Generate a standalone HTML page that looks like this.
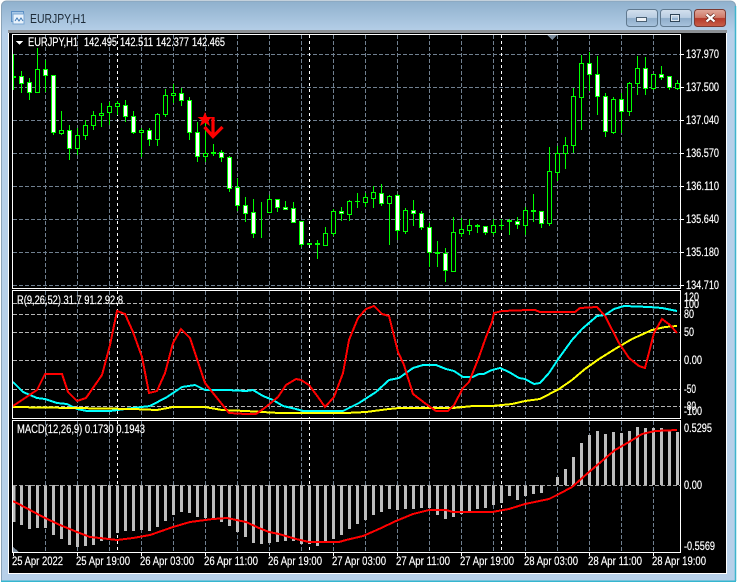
<!DOCTYPE html>
<html><head><meta charset="utf-8"><title>EURJPY,H1</title>
<style>
html,body{margin:0;padding:0;background:#fff;width:738px;height:582px;overflow:hidden}
svg{display:block}
text{font-family:"Liberation Sans",sans-serif;font-size:11.5px;fill:#fff;stroke:#fff;stroke-width:.18px}
</style></head><body>
<svg xmlns="http://www.w3.org/2000/svg" width="738" height="582" viewBox="0 0 738 582">
<defs>
<linearGradient id="tb" x1="0" y1="0" x2="0" y2="1"><stop offset="0" stop-color="#8fb0cd"/><stop offset=".055" stop-color="#b7d0e9"/><stop offset="1" stop-color="#b7d0e9"/></linearGradient>
<linearGradient id="bt" x1="0" y1="0" x2="0" y2="1"><stop offset="0" stop-color="#d3e0ee"/><stop offset=".48" stop-color="#b9cde2"/><stop offset=".52" stop-color="#8fadca"/><stop offset="1" stop-color="#a9c4de"/></linearGradient>
<linearGradient id="cl" x1="0" y1="0" x2="0" y2="1"><stop offset="0" stop-color="#e0a99c"/><stop offset=".48" stop-color="#cf7a69"/><stop offset=".52" stop-color="#b5392a"/><stop offset="1" stop-color="#c9604a"/></linearGradient>
</defs>
<!-- window -->
<path d="M1.5 582V6a5 5 0 0 1 5-5H730a5 5 0 0 1 5.5 5V582" fill="url(#tb)" stroke="#8aa3b8"/>
<path d="M1 581.5H736" stroke="#35b6cf" stroke-width="2"/>
<path d="M735.5 6V581" stroke="#3fb4cc" stroke-width="1.5"/>
<rect x="8" y="30" width="719" height="3" fill="#8b8f93"/>
<rect x="8" y="33" width="719" height="541" fill="#fff"/>
<rect x="9" y="33" width="717" height="540" fill="#000"/>
<!-- title -->
<g shape-rendering="crispEdges">
<rect x="11.500" y="11.500" width="12" height="10" fill="#a9c8e6" stroke="#5b8fc4"/>
<rect x="13" y="14" width="11" height="10" fill="#e8f2fb" stroke="#7ba7d3"/>
</g>
<path d="M15 21l2-3 2 3 2-3 2 3" fill="none" stroke="#3f79b5"/>
<text x="30" y="23" textLength="56" lengthAdjust="spacingAndGlyphs" style="font-size:12.5px;fill:#1d2b38;stroke:none">EURJPY,H1</text>
<!-- buttons -->
<rect x="626.500" y="9.500" width="31" height="17" rx="3" fill="url(#bt)" stroke="#60798f"/>
<rect x="660.500" y="9.500" width="31" height="17" rx="3" fill="url(#bt)" stroke="#60798f"/>
<rect x="694.500" y="9.500" width="31" height="17" rx="3" fill="url(#cl)" stroke="#7c3a32"/>
<rect x="636.500" y="17.500" width="10" height="4" fill="#eef2f6" stroke="#4a5f72"/>
<rect x="670.500" y="14.500" width="9" height="7" fill="none" stroke="#2f4558" stroke-width="1"/>
<rect x="671.500" y="15.500" width="7" height="5" fill="none" stroke="#dfe8f0"/>
<path d="M706.500 14.500l8 7M714.500 14.500l-8 7" stroke="#5d2017" stroke-width="3.600"/>
<path d="M706.500 14.500l8 7M714.500 14.500l-8 7" stroke="#fff" stroke-width="2.200"/>

<g shape-rendering="crispEdges">
<!-- grid -->
<path d="M13 54.500H680M13 87.500H680M13 120.500H680M13 153.500H680M13 186.500H680M13 219.500H680M13 252.500H680M13 285.500H680" stroke="#708090" stroke-dasharray="4 2" fill="none"/>
<path d="M45.500 35V288M77.500 35V288M109.500 35V288M141.500 35V288M173.500 35V288M205.500 35V288M237.500 35V288M269.500 35V288M301.500 35V288M333.500 35V288M365.500 35V288M397.500 35V288M429.500 35V288M461.500 35V288M493.500 35V288M525.500 35V288M557.500 35V288M589.500 35V288M621.500 35V288M653.500 35V288M45.500 291V418M77.500 291V418M109.500 291V418M141.500 291V418M173.500 291V418M205.500 291V418M237.500 291V418M269.500 291V418M301.500 291V418M333.500 291V418M365.500 291V418M397.500 291V418M429.500 291V418M461.500 291V418M493.500 291V418M525.500 291V418M557.500 291V418M589.500 291V418M621.500 291V418M653.500 291V418M45.500 421V552M77.500 421V552M109.500 421V552M141.500 421V552M173.500 421V552M205.500 421V552M237.500 421V552M269.500 421V552M301.500 421V552M333.500 421V552M365.500 421V552M397.500 421V552M429.500 421V552M461.500 421V552M493.500 421V552M525.500 421V552M557.500 421V552M589.500 421V552M621.500 421V552M653.500 421V552" stroke="#708090" stroke-dasharray="4 2" fill="none"/>
<path d="M13 303.500H680M13 314.500H680M13 332.500H680M13 360.500H680M13 389.500H680M13 406.500H680" stroke="#b5b5b5" stroke-dasharray="4 2" fill="none"/>
<path d="M117.500 35V288M309.500 35V288M501.500 35V288M117.500 291V418M309.500 291V418M501.500 291V418M117.500 421V552M309.500 421V552M501.500 421V552" stroke="#fff" stroke-dasharray="3 3" fill="none"/>

<!-- wicks -->
<path stroke="#00ff00" fill="none" d="M13.500 54V90M21.500 71V93M29.500 78V100M37.500 48V92M45.500 60V92M53.500 75V135M61.500 111V135M69.500 125V160M77.500 128V155M85.500 120V140M93.500 111V130M101.500 103V127M109.500 102V125M117.500 101V115M125.500 100V122M133.500 111V134M141.500 128V157M149.500 128V146M157.500 113V146M165.500 89V117M173.500 84V103M181.500 88V106M189.500 97V140M197.500 122V162M205.500 122V162M213.500 144V156M221.500 150V162M229.500 156V192M237.500 178V211M245.500 197V222M253.500 199V238M261.500 202V238M269.500 195V213M277.500 199V212M285.500 201V210M293.500 202V222M301.500 221V247M309.500 243V245M317.500 240V259M325.500 227V245M333.500 209V236M341.500 207V221M349.500 200V221M357.500 193V208M365.500 193V207M373.500 186V208M381.500 184V206M389.500 195V245M397.500 194V240M405.500 208V234M413.500 200V226M421.500 211V230M429.500 223V267M437.500 241V267M445.500 248V282M453.500 217V271M461.500 218V237M469.500 219V235M477.500 224V233M485.500 226V235M493.500 219V235M501.500 219V230M509.500 219V235M517.500 217V229M525.500 207V235M533.500 194V222M541.500 211V228M549.500 147V226M557.500 146V181M565.500 137V169M573.500 88V153M581.500 55V130M589.500 52V91M597.500 56V115M605.500 93V137M613.500 97V134M621.500 93V133M629.500 82V116M637.500 56V95M645.500 57V95M653.500 74V90M661.500 66V80M669.500 76V90M677.500 80V90"/>
<!-- hollow bodies -->
<path stroke="#00ff00" fill="#000" d="M35.500 69.500h4v23h-4zM59.500 130.500h4v3h-4zM75.500 135.500h4v13h-4zM83.500 125.500h4v10h-4zM91.500 115.500h4v10h-4zM99.500 113.500h4v2h-4zM107.500 106.500h4v6h-4zM115.500 103.500h4v3h-4zM139.500 130.500h4v2h-4zM155.500 114.500h4v25h-4zM163.500 95.500h4v19h-4zM171.500 93.500h4v2h-4zM203.500 153.500h4v3h-4zM267.500 199.500h4v13h-4zM323.500 233.500h4v12h-4zM331.500 211.500h4v22h-4zM347.500 201.500h4v13h-4zM363.500 197.500h4v5h-4zM371.500 192.500h4v6h-4zM387.500 196.500h4v7h-4zM403.500 210.500h4v21h-4zM451.500 232.500h4v39h-4zM459.500 229.500h4v4h-4zM467.500 225.500h4v5h-4zM491.500 225.500h4v7h-4zM523.500 210.500h4v15h-4zM547.500 171.500h4v52h-4zM555.500 153.500h4v19h-4zM563.500 145.500h4v8h-4zM571.500 96.500h4v49h-4zM579.500 63.500h4v34h-4zM611.500 99.500h4v33h-4zM627.500 83.500h4v28h-4zM635.500 68.500h4v15h-4zM651.500 74.500h4v14h-4zM675.500 83.500h4v5h-4z"/>
<!-- white bodies -->
<path stroke="#00ff00" fill="#fff" d="M19.500 76.500h4v7h-4zM27.500 82.500h4v10h-4zM43.500 69.500h4v6h-4zM51.500 75.500h4v57h-4zM67.500 130.500h4v18h-4zM123.500 105.500h4v11h-4zM131.500 116.500h4v16h-4zM147.500 130.500h4v9h-4zM179.500 93.500h4v7h-4zM187.500 100.500h4v32h-4zM195.500 132.500h4v24h-4zM219.500 152.500h4v5h-4zM227.500 157.500h4v31h-4zM235.500 187.500h4v18h-4zM243.500 205.500h4v8h-4zM251.500 212.500h4v21h-4zM275.500 199.500h4v8h-4zM283.500 207.500h4v2h-4zM291.500 208.500h4v14h-4zM299.500 221.500h4v23h-4zM339.500 211.500h4v2h-4zM379.500 193.500h4v10h-4zM395.500 195.500h4v35h-4zM411.500 210.500h4v3h-4zM419.500 213.500h4v14h-4zM427.500 227.500h4v25h-4zM443.500 253.500h4v17h-4zM483.500 226.500h4v6h-4zM515.500 221.500h4v3h-4zM539.500 211.500h4v12h-4zM587.500 63.500h4v11h-4zM595.500 74.500h4v22h-4zM603.500 96.500h4v35h-4zM619.500 99.500h4v12h-4zM643.500 68.500h4v20h-4zM659.500 74.500h4v3h-4zM667.500 76.500h4v11h-4z"/>
<!-- doji -->
<path fill="#00ff00" d="M13 76h3v2h-3zM211 152h5v2h-5zM307 243h5v2h-5zM315 243h5v2h-5zM355 201h5v1h-5zM435 252h5v2h-5zM475 225h5v2h-5zM499 225h5v1h-5zM507 220h5v2h-5zM531 210h5v2h-5z"/>

<!-- MACD bars -->
<path stroke="#bdbdbd" stroke-width="3" fill="none" d="M14 485V522M21.500 485V525M29.500 485V529M37.500 485V528M45.500 485V528M53.500 485V535M61.500 485V539M69.500 485V545M77.500 485V547M85.500 485V546M93.500 485V545M101.500 485V541M109.500 485V538M117.500 485V533M125.500 485V531M133.500 485V531M141.500 485V530M149.500 485V531M157.500 485V527M165.500 485V521M173.500 485V515M181.500 485V512M189.500 485V513M197.500 485V517M205.500 485V518M213.500 485V519M221.500 485V522M229.500 485V526M237.500 485V532M245.500 485V537M253.500 485V543M261.500 485V544M269.500 485V543M277.500 485V542M285.500 485V541M293.500 485V541M301.500 485V544M309.500 485V544M317.500 485V546M325.500 485V543M333.500 485V539M341.500 485V535M349.500 485V529M357.500 485V524M365.500 485V520M373.500 485V515M381.500 485V512M389.500 485V509M397.500 485V510M405.500 485V509M413.500 485V509M421.500 485V508M429.500 485V508M437.500 485V515M445.500 485V519M453.500 485V517M461.500 485V514M469.500 485V512M477.500 485V509M485.500 485V508M493.500 485V505M501.500 485V503M509.500 485V496M517.500 485V500M525.500 485V496M533.500 485V494M541.500 485V493M557.500 485V477M565.500 485V469M573.500 485V457M581.500 485V443M589.500 485V435M597.500 485V431M605.500 485V434M613.500 485V432M621.500 485V433M629.500 485V431M637.500 485V427M645.500 485V428M653.500 485V428M661.500 485V428M669.500 485V431M677.500 485V432"/>
<path d="M13 485.500H680" stroke="#a0a0a0" stroke-dasharray="4 2" fill="none"/>

<!-- indicator lines -->
<polyline fill="none" stroke="#00ffff" stroke-width="2" points="13,382 23,392 37,398 45,399 57,403 67,404 77,409 87,411 110,411 133,408 150,406 167,397 182,387 195,385 205,390 227,390 246,391 253,390 263,396 273,400 283,406 296,409 303,411 343,411 359,403 376,392 389,380 399,378 413,368 423,365 436,365 446,369 454,371 463,377 473,377 479,374 484,374 492,370 500,368 509,372 519,378 525,379 534,384 540,383 549,373 559,358 572,340 582,329 597,316 605,315 614,309 624,306 649,307 662,308 677,311"/>
<polyline fill="none" stroke="#ffff00" stroke-width="2" points="13,407 133,409 157,410 173,407 205,407 222,410 246,411 279,413 346,413 366,412 389,409 399,408 453,408 473,406 492,406 512,404 525,401 540,399 559,389 572,380 585,369 599,359 615,349 632,339 652,330 665,327 677,326"/>
<polyline fill="none" stroke="#ff0000" stroke-width="2" points="13,406 37,390 45,374 62,374 68,392 77,401 86,398 102,375 110,345 117,311 125,314 133,332 142,357 149,393 157,391 165,373 173,343 181,329 190,338 205,383 213,393 229,413 246,414 256,414 266,407 278,397 286,385 296,379 301,380 309,385 318,397 325,407 334,397 343,373 349,340 358,318 366,309 374,306 382,314 389,316 398,352 404,365 413,394 426,404 436,411 448,411 454,405 463,388 469,382 479,357 486,337 492,322 494,313 502,311 529,310 535,310 540,312 575,312 580,308 597,307 605,316 619,343 629,358 639,366 645,368 654,333 662,319 670,325 677,333"/>
<polyline fill="none" stroke="#ff0000" stroke-width="2" points="13,501 30,510 43,517 60,525 77,532 90,537 100,538 117,540 133,538 150,535 173,527 190,522 213,519 227,518 246,522 259,528 269,532 279,534 296,539 309,542 339,542 346,540 363,536 379,529 396,521 413,514 429,510 446,510 453,512 492,512 509,509 525,504 549,499 559,494 572,487 589,472 602,461 615,450 629,442 642,434 655,431 677,430"/>

<!-- frames -->
<path stroke="#fff" fill="none" d="M12.500 34.500H680.500V288.500H12.500ZM12.500 290.500H680.500V418.500H12.500ZM12.500 420.500H680.500V552.500H12.500Z"/>
<!-- ticks -->
<path stroke="#fff" fill="none" d="M681 54.500h3M681 87.500h3M681 120.500h3M681 153.500h3M681 186.500h3M681 219.500h3M681 252.500h3M681 285.500h3M13.500 553v3M77.500 553v3M141.500 553v3M205.500 553v3M269.500 553v3M333.500 553v3M397.500 553v3M461.500 553v3M525.500 553v3M589.500 553v3M653.500 553v3"/>
<path d="M547 35h10l-5 5z" fill="#7b8b9b"/>
<path d="M13 547l6 5h-6z" fill="#7b8b9b"/>
<path d="M16 41h7l-3.500 4z" fill="#fff"/>
</g>

<!-- arrow signal -->
<polygon fill="#ff0000" points="205,112 207,117 212.500,117 208.200,120.500 210,126 205,122.800 200,126 201.800,120.500 197.500,117 203,117"/>
<path d="M213 117V136M204.500 127l8.500 9.500 9.500-9.500" fill="none" stroke="#ff0000" stroke-width="3.200"/>

<!-- header text -->
<text x="28" y="46" textLength="50" lengthAdjust="spacingAndGlyphs">EURJPY,H1</text>
<text x="84" y="46" textLength="33" lengthAdjust="spacingAndGlyphs">142.495</text>
<text x="120" y="46" textLength="33" lengthAdjust="spacingAndGlyphs">142.511</text>
<text x="156" y="46" textLength="33" lengthAdjust="spacingAndGlyphs">142.377</text>
<text x="192" y="46" textLength="33" lengthAdjust="spacingAndGlyphs">142.465</text>
<text x="17" y="304" textLength="106" lengthAdjust="spacingAndGlyphs">R(9,26,52) 31.7 91.2 92.8</text>
<text x="17" y="433" textLength="128" lengthAdjust="spacingAndGlyphs">MACD(12,26,9) 0.1730 0.1943</text>

<!-- price labels -->
<text x="686" y="58" textLength="33" lengthAdjust="spacingAndGlyphs">137.970</text>
<text x="686" y="91" textLength="33" lengthAdjust="spacingAndGlyphs">137.500</text>
<text x="686" y="124" textLength="33" lengthAdjust="spacingAndGlyphs">137.040</text>
<text x="686" y="157" textLength="33" lengthAdjust="spacingAndGlyphs">136.570</text>
<text x="686" y="190" textLength="33" lengthAdjust="spacingAndGlyphs">136.110</text>
<text x="686" y="223" textLength="33" lengthAdjust="spacingAndGlyphs">135.640</text>
<text x="686" y="256" textLength="33" lengthAdjust="spacingAndGlyphs">135.180</text>
<text x="686" y="289" textLength="33" lengthAdjust="spacingAndGlyphs">134.710</text>

<text x="684" y="301" textLength="15" lengthAdjust="spacingAndGlyphs">120</text>
<text x="684" y="308" textLength="15" lengthAdjust="spacingAndGlyphs">100</text>
<text x="684" y="318" textLength="10" lengthAdjust="spacingAndGlyphs">80</text>
<text x="684" y="336" textLength="10" lengthAdjust="spacingAndGlyphs">50</text>
<text x="684" y="364" textLength="18" lengthAdjust="spacingAndGlyphs">0.00</text>
<text x="684" y="393" textLength="12" lengthAdjust="spacingAndGlyphs">-50</text>
<text x="684" y="410" textLength="12" lengthAdjust="spacingAndGlyphs">-80</text>
<text x="684" y="415" textLength="18" lengthAdjust="spacingAndGlyphs">-100</text>

<text x="684" y="432" textLength="28" lengthAdjust="spacingAndGlyphs">0.5295</text>
<text x="684" y="489" textLength="18" lengthAdjust="spacingAndGlyphs">0.00</text>
<text x="684" y="550" textLength="31" lengthAdjust="spacingAndGlyphs">-0.5569</text>

<!-- time labels -->
<text x="12" y="565" textLength="51" lengthAdjust="spacingAndGlyphs">25 Apr 2022</text>
<text x="76" y="565" textLength="54" lengthAdjust="spacingAndGlyphs">25 Apr 19:00</text>
<text x="140" y="565" textLength="54" lengthAdjust="spacingAndGlyphs">26 Apr 03:00</text>
<text x="204" y="565" textLength="54" lengthAdjust="spacingAndGlyphs">26 Apr 11:00</text>
<text x="268" y="565" textLength="54" lengthAdjust="spacingAndGlyphs">26 Apr 19:00</text>
<text x="332" y="565" textLength="54" lengthAdjust="spacingAndGlyphs">27 Apr 03:00</text>
<text x="396" y="565" textLength="54" lengthAdjust="spacingAndGlyphs">27 Apr 11:00</text>
<text x="460" y="565" textLength="54" lengthAdjust="spacingAndGlyphs">27 Apr 19:00</text>
<text x="524" y="565" textLength="54" lengthAdjust="spacingAndGlyphs">28 Apr 03:00</text>
<text x="588" y="565" textLength="54" lengthAdjust="spacingAndGlyphs">28 Apr 11:00</text>
<text x="652" y="565" textLength="54" lengthAdjust="spacingAndGlyphs">28 Apr 19:00</text>
</svg>
</body></html>
